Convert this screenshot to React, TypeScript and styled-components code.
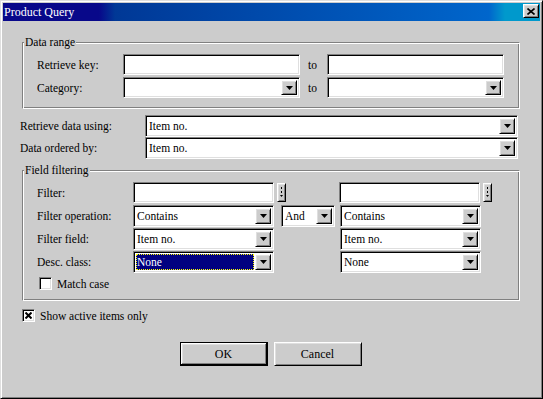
import React from "react";
import styled, { createGlobalStyle, css } from "styled-components";

const GlobalStyle = createGlobalStyle`
  html, body {
    margin: 0;
    padding: 0;
    background: #cccccc;
  }
  body {
    font-family: "Liberation Serif", "Times New Roman", serif;
    font-size: 11.5px;
    color: #000;
  }
  * {
    box-sizing: border-box;
  }
`;

const raised = css`
  background: #cccccc;
  border: 1px solid;
  border-color: #fff #000 #000 #fff;
  box-shadow: inset 1px 1px #dfdfdf, inset -1px -1px #808080;
`;

const sunken = css`
  border: 1px solid;
  border-color: #808080 #fff #fff #808080;
  box-shadow: inset 1px 1px #000, inset -1px -1px #dfdfdf;
`;

const Window = styled.div`
  width: 543px;
  height: 399px;
  background: #cccccc;
  border: 1px solid;
  border-color: #dfdfdf #000 #000 #dfdfdf;
  box-shadow: inset 1px 1px #fff, inset -1px -1px #808080;
  padding: 2px;
  display: flex;
  flex-direction: column;
`;

const TitleBar = styled.div`
  height: 18px;
  display: flex;
  align-items: center;
  justify-content: space-between;
  padding: 0 1px 0 1px;
  color: #fff;
  font-size: 12px;
  background: linear-gradient(
    90deg,
    #08088a 0,
    #08088a 96px,
    #003896 112px,
    #0066cc 486px,
    #0099cc 502px,
    #0099cc 100%
  );
`;

const CloseButton = styled.div`
  ${raised};
  width: 16px;
  height: 14px;
  margin-top: -2px;
  display: flex;
  align-items: center;
  justify-content: center;
`;

const Body = styled.div`
  padding: 21px 20px 0 17px;
  display: flex;
  flex-direction: column;
`;

const Group = styled.div<{ $h: number; $mt?: number }>`
  position: relative;
  margin-left: 2px;
  margin-top: ${(p) => p.$mt ?? 0}px;
  height: ${(p) => p.$h}px;
  border: 1px solid;
  border-color: #808080 #fff #fff #808080;
  box-shadow: inset 1px 1px #fff, inset -1px -1px #808080;
  padding: 11px 0 0 14px;
  display: flex;
  flex-direction: column;
`;

const Legend = styled.span`
  position: absolute;
  top: -8px;
  left: 1px;
  padding: 0 1px 0 1px;
  background: #cccccc;
  line-height: 14px;
`;

const Row = styled.div<{ $h?: number; $mt?: number }>`
  display: flex;
  align-items: center;
  height: ${(p) => p.$h ?? 21}px;
  margin-top: ${(p) => p.$mt ?? 0}px;
`;

const Label = styled.div<{ $w: number }>`
  width: ${(p) => p.$w}px;
  flex: none;
  white-space: nowrap;
`;

const To = styled.div`
  width: 27px;
  flex: none;
  padding-left: 8px;
`;

const Field = styled.div<{ $w: number }>`
  ${sunken};
  width: ${(p) => p.$w}px;
  height: 100%;
  flex: none;
  background: #fff;
  padding: 2px;
  display: flex;
  align-items: stretch;
`;

const Value = styled.div<{ $selected?: boolean }>`
  flex: 1;
  display: flex;
  align-items: center;
  padding-left: 1px;
  margin-right: 1px;
  white-space: nowrap;
  overflow: hidden;
  ${(p) =>
    p.$selected &&
    css`
      background: #000080;
      color: #fff;
      outline: 1px dotted #ffff00;
      outline-offset: -1px;
    `}
`;

const DropButton = styled.div`
  ${raised};
  width: 16px;
  flex: none;
  display: flex;
  align-items: center;
  justify-content: center;
`;

const Spin = styled.div<{ $ml: number }>`
  ${raised};
  width: 9px;
  height: 19px;
  margin-left: ${(p) => p.$ml}px;
  flex: none;
  display: flex;
  align-items: center;
  justify-content: center;
`;

const Gap = styled.div<{ $w: number }>`
  width: ${(p) => p.$w}px;
  flex: none;
`;

const CheckRow = styled.label<{ $mt: number; $ml: number }>`
  display: flex;
  align-items: center;
  height: 13px;
  margin-top: ${(p) => p.$mt}px;
  margin-left: ${(p) => p.$ml}px;
  gap: 5px;
  white-space: nowrap;
`;

const Box = styled.div`
  ${sunken};
  width: 13px;
  height: 13px;
  background: #fff;
  display: flex;
  align-items: center;
  justify-content: center;
`;

const Buttons = styled.div`
  display: flex;
  justify-content: center;
  gap: 6px;
  margin-top: 20px;
  padding-left: 1px;
`;

const PushButton = styled.div<{ $default?: boolean }>`
  width: 88px;
  height: 24px;
  display: flex;
  align-items: center;
  justify-content: center;
  background: #cccccc;
  font-size: 12px;
  ${(p) =>
    p.$default
      ? css`
          border: 1px solid #000;
          box-shadow: inset -1px -1px #000, inset 1px 1px #fff,
            inset -2px -2px #808080, inset 2px 2px #dfdfdf;
        `
      : css`
          border: 1px solid;
          border-color: #fff #000 #000 #fff;
          box-shadow: inset 1px 1px #dfdfdf, inset -1px -1px #808080;
        `}
`;

const Arrow = () => (
  <svg width="7" height="4" viewBox="0 0 7 4">
    <path d="M0 0h7L3.5 4z" fill="#000" />
  </svg>
);

const SpinGlyph = () => (
  <svg width="3" height="11" viewBox="0 0 3 11">
    <rect x="1" y="0" width="1" height="2" fill="#000" />
    <rect x="1" y="4" width="1" height="2" fill="#000" />
    <path d="M0 8h3L1.5 10z" fill="#000" />
  </svg>
);

const Combo: React.FC<{ w: number; value?: string; selected?: boolean }> = ({
  w,
  value = "",
  selected,
}) => (
  <Field $w={w}>
    <Value $selected={selected}>{value}</Value>
    <DropButton>
      <Arrow />
    </DropButton>
  </Field>
);

const Edit: React.FC<{ w: number }> = ({ w }) => (
  <Field $w={w}>
    <Value />
  </Field>
);

const Check: React.FC<{ checked?: boolean }> = ({ checked }) => (
  <Box>
    {checked && (
      <svg width="7" height="7" viewBox="0 0 7 7">
        <path d="M0.5 0.5L6.5 6.5M6.5 0.5L0.5 6.5" stroke="#000" strokeWidth="2" />
      </svg>
    )}
  </Box>
);

export default function App() {
  return (
    <>
      <GlobalStyle />
      <Window>
        <TitleBar>
          <span>Product Query</span>
          <CloseButton>
            <svg width="8" height="7" viewBox="0 0 8 7">
              <path d="M0.5 0.5L7.5 6.5M7.5 0.5L0.5 6.5" stroke="#000" strokeWidth="1.6" />
            </svg>
          </CloseButton>
        </TitleBar>
        <Body>
          <Group $h={67}>
            <Legend>Data range</Legend>
            <Row>
              <Label $w={86}>Retrieve key:</Label>
              <Edit w={177} />
              <To>to</To>
              <Edit w={177} />
            </Row>
            <Row $mt={2}>
              <Label $w={86}>Category:</Label>
              <Combo w={177} />
              <To>to</To>
              <Combo w={177} />
            </Row>
          </Group>

          <Row $h={22} $mt={6}>
            <Label $w={125}>Retrieve data using:</Label>
            <Combo w={373} value="Item no." />
          </Row>
          <Row $h={22}>
            <Label $w={125}>Data ordered by:</Label>
            <Combo w={373} value="Item no." />
          </Row>

          <Group $h={131} $mt={11}>
            <Legend>Field filtering</Legend>
            <Row>
              <Label $w={96}>Filter:</Label>
              <Edit w={141} />
              <Spin $ml={3}>
                <SpinGlyph />
              </Spin>
              <Gap $w={53} />
              <Edit w={141} />
              <Spin $ml={3}>
                <SpinGlyph />
              </Spin>
            </Row>
            <Row $h={22} $mt={2}>
              <Label $w={96}>Filter operation:</Label>
              <Combo w={141} value="Contains" />
              <Gap $w={7} />
              <Combo w={54} value="And" />
              <Gap $w={5} />
              <Combo w={141} value="Contains" />
            </Row>
            <Row $h={22} $mt={1}>
              <Label $w={96}>Filter field:</Label>
              <Combo w={141} value="Item no." />
              <Gap $w={66} />
              <Combo w={141} value="Item no." />
            </Row>
            <Row $h={22} $mt={1}>
              <Label $w={96}>Desc. class:</Label>
              <Combo w={141} value="None" selected />
              <Gap $w={66} />
              <Combo w={141} value="None" />
            </Row>
            <CheckRow $mt={4} $ml={2}>
              <Check />
              <span>Match case</span>
            </CheckRow>
          </Group>

          <CheckRow $mt={8} $ml={2}>
            <Check checked />
            <span>Show active items only</span>
          </CheckRow>

          <Buttons>
            <PushButton $default>OK</PushButton>
            <PushButton>Cancel</PushButton>
          </Buttons>
        </Body>
      </Window>
    </>
  );
}
